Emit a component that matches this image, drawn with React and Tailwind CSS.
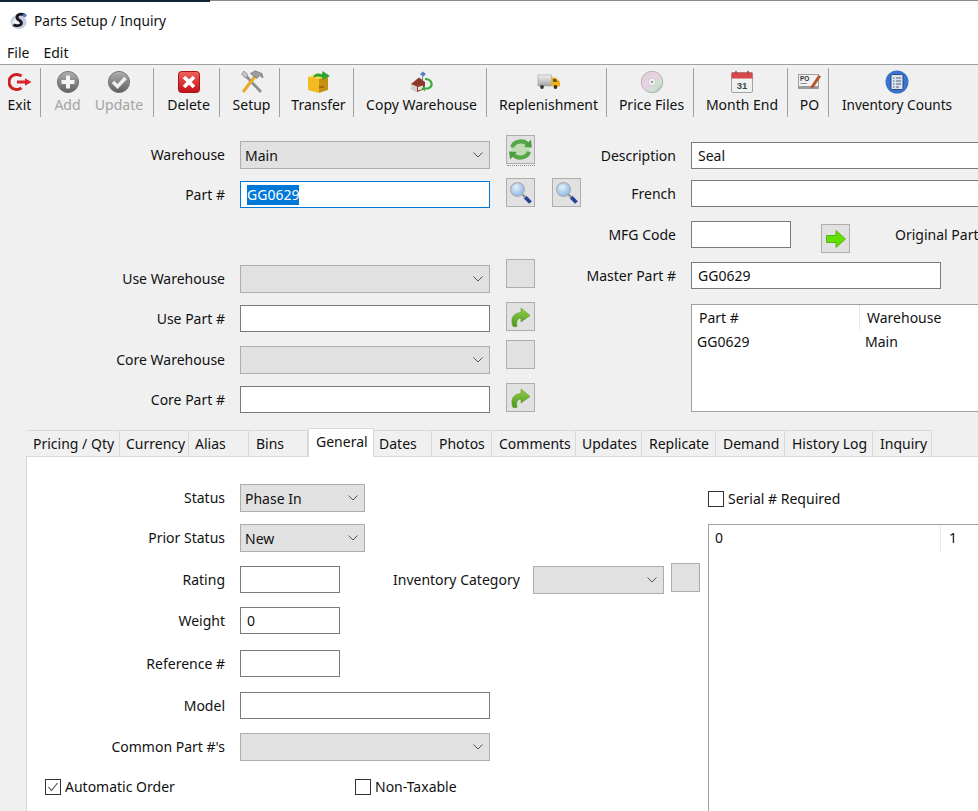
// toolbar icons, drawn by hand because none of the packages have these bitmaps
const SLogo = () => (
  <svg width="19" height="20" viewBox="0 0 20 20">
    <ellipse cx="9" cy="11" rx="8.5" ry="7.5" fill="#c3cbe0" />
    <ellipse cx="8" cy="12" rx="5.5" ry="5" fill="#eef0f6" />
    <path d="M15 3.5 C10 1.5 6.5 4 7.5 7 C8.5 9.5 12.5 9.5 12 12.5 C11.5 15.5 6 15.5 3.5 14" fill="none" stroke="#16161d" strokeWidth="3" />
    <circle cx="15.5" cy="4" r="2" fill="#5a78c8" />
  </svg>
);

const ExitIcon = () => (
  <svg width="24" height="24" viewBox="0 0 24 24">
    <path d="M13.5 6.2 A7.6 7.6 0 1 0 13.5 17.8" fill="none" stroke="#cf1f26" strokeWidth="3" />
    <path d="M9 10.6 H17 V8.2 L23.5 12 L17 15.8 V13.4 H9 Z" fill="#d8262c" />
  </svg>
);

const RoundIcon = ({ id, children }) => (
  <svg width="24" height="24" viewBox="0 0 24 24">
    <defs>
      <linearGradient id={id} x1="0" y1="0" x2="0" y2="1">
        <stop offset="0" stopColor="#b0b0b0" />
        <stop offset="1" stopColor="#5f5f5f" />
      </linearGradient>
    </defs>
    <circle cx="12" cy="12" r="10.6" fill={`url(#${id})`} stroke="#777" />
    {children}
  </svg>
);

const AddIcon = () => (
  <RoundIcon id="addGrad">
    <path d="M10 5.5 H14 V10 H18.5 V14 H14 V18.5 H10 V14 H5.5 V10 H10 Z" fill="#f4f4f4" />
  </RoundIcon>
);

const UpdateIcon = () => (
  <RoundIcon id="updGrad">
    <path d="M6 12 L10.5 16.5 L18.5 8" fill="none" stroke="#efefef" strokeWidth="3.4" />
  </RoundIcon>
);

const DeleteIcon = () => (
  <svg width="24" height="24" viewBox="0 0 24 24">
    <defs>
      <linearGradient id="delGrad" x1="0" y1="0" x2="0" y2="1">
        <stop offset="0" stopColor="#f0625c" />
        <stop offset="1" stopColor="#c40f16" />
      </linearGradient>
    </defs>
    <rect x="1.5" y="1.5" width="21" height="21" rx="3" fill="url(#delGrad)" stroke="#a8141a" />
    <path d="M7 7 L17 17 M17 7 L7 17" stroke="#fff" strokeWidth="3.8" />
  </svg>
);

const SetupIcon = () => (
  <svg width="24" height="24" viewBox="0 0 24 24">
    <path d="M5 5 L21 22" stroke="#8a8f94" strokeWidth="2.8" />
    <path d="M1.5 4 L4 1 L7 3.5 L7.5 7 L4.5 7.5 Z" fill="#c3c7cb" stroke="#80858a" strokeWidth="0.7" />
    <path d="M3 22 L16 5" stroke="#e9ab2a" strokeWidth="3.2" />
    <path d="M10.5 3.5 L15 0.8 L22 3.5 L23 8 L19.5 5.5 L17 8.5 L13.5 6 Z" fill="#9a9ea2" stroke="#6e7276" strokeWidth="0.7" />
  </svg>
);

const TransferIcon = () => (
  <svg width="24" height="24" viewBox="0 0 24 24">
    <path d="M1 7 L12 5 L12 23 L1 20 Z" fill="#f2bb22" />
    <path d="M12 5 L21 7 L21 20 L12 23 Z" fill="#c98f12" />
    <path d="M1 7 L10 3 L21 7 L12 9 Z" fill="#f8d95c" />
    <path d="M6 8 C7 3 12 2.5 15 4.5 L15.5 1 L23 6 L15 10 L15.5 7.5 C12 6 9 6 6 8 Z" fill="#2ea52e" />
    <path d="M12 17 H17" stroke="#6e4d05" />
  </svg>
);

const CopyWarehouseIcon = () => (
  <svg width="24" height="24" viewBox="0 0 24 24">
    <path d="M10 4 L13 1.5 L16 4 L13 7 Z" fill="#5a80c4" />
    <path d="M12.5 7 V10" stroke="#777" />
    <path d="M1 14 L9 7.5 L15 12 V19 L7 22 L1 18.5 Z" fill="#8c3a2a" />
    <path d="M1 14 L7 16.5 V22 L1 18.5 Z" fill="#d8d3cc" />
    <path d="M8 17 L13 15.5 V19 L8 20.5 Z" fill="#e8e3dc" />
    <path d="M15 9 C22 9 24 16 18 18.5 L13.5 18.5" fill="none" stroke="#3aac3a" strokeWidth="2.2" />
    <path d="M15 15.5 L11.5 18.5 L15 21.5 Z" fill="#3aac3a" />
  </svg>
);

const TruckIcon = () => (
  <svg width="24" height="24" viewBox="0 0 24 24">
    <defs>
      <linearGradient id="boxGrad" x1="0" y1="0" x2="0" y2="1">
        <stop offset="0" stopColor="#f2f2f2" />
        <stop offset="1" stopColor="#a4a4a4" />
      </linearGradient>
    </defs>
    <rect x="1" y="5" width="13.5" height="11" fill="url(#boxGrad)" stroke="#999" strokeWidth="0.6" />
    <path d="M14.5 7.5 H19 L23 12 V16.5 H14.5 Z" fill="#efb01e" />
    <path d="M16 9 H18.5 L20.5 11.8 H16 Z" fill="#5b4a1e" />
    <circle cx="5" cy="17" r="1.9" fill="#333" />
    <circle cx="18.5" cy="17" r="1.9" fill="#333" />
  </svg>
);

const DiscIcon = () => (
  <svg width="24" height="24" viewBox="0 0 24 24">
    <defs>
      <linearGradient id="cdGrad" x1="0" y1="0" x2="1" y2="1">
        <stop offset="0" stopColor="#d2d2d2" />
        <stop offset="0.45" stopColor="#ecd0e6" />
        <stop offset="0.75" stopColor="#c6e2ca" />
        <stop offset="1" stopColor="#9c9c9c" />
      </linearGradient>
    </defs>
    <circle cx="12" cy="12" r="10.8" fill="url(#cdGrad)" stroke="#a3a3a3" strokeWidth="0.7" />
    <circle cx="12" cy="12" r="3.6" fill="#f7f7f7" stroke="#bbb" strokeWidth="0.6" />
    <circle cx="12" cy="12" r="1.3" fill="#9c9c9c" />
  </svg>
);

const CalendarIcon = () => (
  <svg width="24" height="24" viewBox="0 0 24 24">
    <rect x="1.5" y="2.5" width="21" height="20" rx="1.5" fill="#eef1f0" stroke="#8f8f8f" strokeWidth="0.8" />
    <rect x="1.5" y="2.5" width="21" height="6" fill="#d8474b" />
    <path d="M6 0.8 V4 M18 0.8 V4" stroke="#8f4a4a" strokeWidth="1.4" />
    <text x="12" y="19" textAnchor="middle" fontSize="9.5" fontWeight="700" fill="#3b4c4c" fontFamily="Liberation Sans, sans-serif">31</text>
  </svg>
);

const PoIcon = () => (
  <svg width="24" height="24" viewBox="0 0 24 24">
    <rect x="0.5" y="4.5" width="20" height="14" fill="#f1f1f1" stroke="#8a8a8a" strokeWidth="0.8" />
    <rect x="0.5" y="16" width="20" height="3" fill="#9a9a9a" />
    <text x="2" y="11" fontSize="6.5" fontWeight="700" fill="#333" fontFamily="Liberation Sans, sans-serif">PO</text>
    <path d="M2.5 13.5 H9" stroke="#777" strokeWidth="0.8" />
    <path d="M13 16 L20.5 5 L23 6.5 L15.5 17.5 L12.5 18.5 Z" fill="#b5562a" />
  </svg>
);

const CountsIcon = () => (
  <svg width="24" height="24" viewBox="0 0 24 24">
    <circle cx="12" cy="12" r="11.5" fill="#3a72d0" />
    <rect x="6" y="4.5" width="12" height="15" rx="1" fill="#dbe3ee" stroke="#26416e" strokeWidth="0.9" />
    <path d="M8 8 H9.5 M11 8 H16 M8 11 H9.5 M11 11 H16 M8 14 H9.5 M11 14 H16 M8 17 H9.5 M11 17 H14" stroke="#40516e" strokeWidth="0.9" />
  </svg>
);

const RefreshIcon = () => (
  <svg width="25" height="25" viewBox="0 0 24 24">
    <circle cx="12" cy="12" r="9" fill="#bfdcb4" />
    <path d="M4 10 C5 4.5 14 2 19 7" fill="none" stroke="#55a848" strokeWidth="4" />
    <path d="M15.5 9.5 L23 10 L22 2.5 Z" fill="#4c9e40" />
    <path d="M20 14 C19 19.5 10 22 5 17" fill="none" stroke="#55a848" strokeWidth="4" />
    <path d="M8.5 14.5 L1 14 L2 21.5 Z" fill="#4c9e40" />
  </svg>
);

const SearchIcon = () => (
  <svg width="24" height="24" viewBox="0 0 24 24">
    <defs>
      <radialGradient id="lens" cx="0.4" cy="0.35" r="0.7">
        <stop offset="0" stopColor="#e6f1fb" />
        <stop offset="1" stopColor="#86b4e4" />
      </radialGradient>
    </defs>
    <path d="M16 16 L21.5 21.5" stroke="#1f4496" strokeWidth="3.8" />
    <path d="M13 13 L16.5 16.5" stroke="#8b8f96" strokeWidth="2.2" />
    <circle cx="8.5" cy="8.5" r="6.9" fill="url(#lens)" stroke="#aab1ba" strokeWidth="1.3" />
  </svg>
);

const GreenArrow = () => (
  <svg width="22" height="22" viewBox="0 0 22 22">
    <path d="M1.5 7.5 H11 V2.5 L20.5 11 L11 19.5 V14.5 H1.5 Z" fill="#62e000" stroke="#4da510" strokeWidth="0.8" />
  </svg>
);

const CurvedArrow = ({ id }) => (
  <svg width="22" height="22" viewBox="0 0 22 22">
    <defs>
      <linearGradient id={id} x1="0" y1="0" x2="0" y2="1">
        <stop offset="0" stopColor="#93cf48" />
        <stop offset="1" stopColor="#4a9a1a" />
      </linearGradient>
    </defs>
    <path d="M3 20.5 C0 13 3 7 11 6.5 V2 L20 9.5 L11 16 V12 C7.5 12 6 15 7 20.5 Z" fill={`url(#${id})`} stroke="#4b8c1d" strokeWidth="0.5" />
  </svg>
);

const Chevron = () => (
  <svg width="10" height="6" viewBox="0 0 10 6" className="shrink-0">
    <path d="M0.5 0.5 L5 5 L9.5 0.5" fill="none" stroke="#555" />
  </svg>
);

const tools = [
  { label: 'Exit', icon: ExitIcon, cls: 'w-[41px] pr-[1px]' },
  { label: 'Add', icon: AddIcon, cls: 'w-[53px] border-r-0', off: true },
  { label: 'Update', icon: UpdateIcon, cls: 'w-[60px] pr-[9px]', off: true },
  { label: 'Delete', icon: DeleteIcon, cls: 'w-[66px] pl-1' },
  { label: 'Setup', icon: SetupIcon, cls: 'w-[60px] pl-1' },
  { label: 'Transfer', icon: TransferIcon, cls: 'w-[74px] pl-1' },
  { label: 'Copy Warehouse', icon: CopyWarehouseIcon, cls: 'w-[133px] pl-[3px]' },
  { label: 'Replenishment', icon: TruckIcon, cls: 'w-[120px] pl-1' },
  { label: 'Price Files', icon: DiscIcon, cls: 'w-[87px] pl-[3px]' },
  { label: 'Month End', icon: CalendarIcon, cls: 'w-[94px] pl-[3px]' },
  { label: 'PO', icon: PoIcon, cls: 'w-[41px] pl-[3px]' },
  { label: 'Inventory Counts', icon: CountsIcon, cls: 'w-[132px] pl-1 border-r-0 text-[13.6px]' },
];

const tabs = [
  { label: 'Pricing / Qty', cls: 'w-[93px] pl-[6px]' },
  { label: 'Currency', cls: 'w-[69px] pl-[6px]' },
  { label: 'Alias', cls: 'w-[60px] pl-[6px]' },
  { label: 'Bins', cls: 'w-[59px] pl-[7px]' },
  { label: 'General', active: true },
  { label: 'Dates', cls: 'w-[58px] pl-[5px]' },
  { label: 'Photos', cls: 'w-[60px] pl-[7px]' },
  { label: 'Comments', cls: 'w-[84px] pl-[7px]' },
  { label: 'Updates', cls: 'w-[66px] pl-[6px]' },
  { label: 'Replicate', cls: 'w-[74px] pl-[7px]' },
  { label: 'Demand', cls: 'w-[69px] pl-[7px]' },
  { label: 'History Log', cls: 'w-[88px] pl-[7px]' },
  { label: 'Inquiry', cls: 'w-[59px] pl-[7px]' },
];

const Tool = ({ label, icon: Icon, cls, off }) => (
  <div className={`h-[49px] shrink-0 flex flex-col items-center border-r border-[#a0a0a0] ${cls}`}>
    <div className="h-[26px] pt-[2px]"><Icon /></div>
    <span className={`h-[20px] leading-[21px] whitespace-nowrap ${off ? 'text-[#a3a3a3]' : ''}`}>{label}</span>
  </div>
);

const Select = ({ value, cls }) => (
  <div className={`h-[28px] shrink-0 flex items-center justify-between pl-[4px] pr-[6px] bg-[#e1e1e1] border border-[#adadad] ${cls}`}>
    <span>{value}</span>
    <Chevron />
  </div>
);

const Field = ({ value = '', cls }) => (
  <input readOnly value={value} className={`h-[27px] shrink-0 px-[6px] bg-white border border-[#7a7a7a] outline-none ${cls}`} />
);

const SquareBtn = ({ cls, children }) => (
  <div className={`w-[29px] h-[29px] shrink-0 flex items-center justify-center bg-[#e1e1e1] border border-[#adadad] ${cls}`}>
    {children}
  </div>
);

const Row = ({ label, labelCls, cls, children }) => (
  <div className={`flex items-start ${cls}`}>
    <div className={`text-right shrink-0 leading-[27px] ${labelCls}`}>{label}</div>
    {children}
  </div>
);

const CheckBox = ({ checked, label, cls }) => (
  <div className={`flex items-center gap-[4px] ${cls}`}>
    <div className="w-[16px] h-[16px] flex items-center justify-center bg-white border border-[#333]">
      {checked && (
        <svg width="12" height="12" viewBox="0 0 12 12">
          <path d="M1.5 6 L4.5 9.5 L10.5 2" fill="none" stroke="#444" strokeWidth="1.1" />
        </svg>
      )}
    </div>
    <span>{label}</span>
  </div>
);

export default function App() {
  return (
    <div className="w-[978px] h-[811px] overflow-hidden bg-[#f0f0f0] text-[#111] text-[14px] font-['Noto_Sans',sans-serif]">
      {/* title bar */}
      <div className="flex h-[2px] bg-white">
        <div className="w-[210px] bg-[#0e2238]" />
        <div className="flex-1 h-[1px] bg-[#8a8a8a]" />
      </div>
      <div className="h-[38px] bg-white flex items-center pl-[10px] gap-[5px]">
        <SLogo />
        <span className="text-[13.7px]">Parts Setup / Inquiry</span>
      </div>
      <div className="h-[25px] bg-white border-b border-[#a0a0a0] flex items-center pl-[7px] gap-[14px]">
        <span>File</span>
        <span>Edit</span>
      </div>

      {/* toolbar */}
      <div className="h-[61px] pt-[3px] flex">
        {tools.map((t) => <Tool key={t.label} {...t} />)}
      </div>

      {/* top form */}
      <div className="h-[304px] flex overflow-hidden">
        <div className="w-[581px] shrink-0 pt-[15px]">
          <Row label="Warehouse" labelCls="w-[225px]">
            <Select value="Main" cls="ml-[15px] w-[250px]" />
            <div className="relative ml-[16px] -mt-[6px]">
              <SquareBtn><RefreshIcon /></SquareBtn>
              <div className="absolute left-[1px] right-0 -bottom-[2px] border-t border-dotted border-[#8a8a8a]" />
            </div>
          </Row>
          <Row label="Part #" labelCls="w-[225px]" cls="mt-[12px]">
            <div className="ml-[15px] w-[250px] h-[27px] flex items-center pl-[6px] bg-white border border-[#0078d7]">
              <span className="bg-[#0078d7] text-white leading-[20px]">GG0629</span>
            </div>
            <SquareBtn cls="ml-[16px] -mt-[3px]"><SearchIcon /></SquareBtn>
            <SquareBtn cls="ml-[17px] -mt-[3px]"><SearchIcon /></SquareBtn>
          </Row>
          <Row label="Use Warehouse" labelCls="w-[225px]" cls="mt-[57px]">
            <Select cls="ml-[15px] w-[250px]" />
            <SquareBtn cls="ml-[16px] -mt-[6px]" />
          </Row>
          <Row label="Use Part #" labelCls="w-[225px]" cls="mt-[12px]">
            <Field cls="ml-[15px] w-[250px]" />
            <SquareBtn cls="ml-[16px] -mt-[3px]"><CurvedArrow id="useArrow" /></SquareBtn>
          </Row>
          <Row label="Core Warehouse" labelCls="w-[225px]" cls="mt-[14px]">
            <Select cls="ml-[15px] w-[250px]" />
            <SquareBtn cls="ml-[16px] -mt-[6px]" />
          </Row>
          <Row label="Core Part #" labelCls="w-[225px]" cls="mt-[12px]">
            <Field cls="ml-[15px] w-[250px]" />
            <SquareBtn cls="ml-[16px] -mt-[3px]"><CurvedArrow id="coreArrow" /></SquareBtn>
          </Row>
        </div>

        <div className="flex-1 min-w-0 pt-[16px]">
          <Row label="Description" labelCls="w-[95px]">
            <Field value="Seal" cls="ml-[15px] w-[320px]" />
          </Row>
          <Row label="French" labelCls="w-[95px]" cls="mt-[11px]">
            <Field cls="ml-[15px] w-[320px]" />
          </Row>
          <Row label="MFG Code" labelCls="w-[95px]" cls="mt-[14px]">
            <Field cls="ml-[15px] w-[100px]" />
            <SquareBtn cls="ml-[30px] mt-[3px] -mb-[5px]"><GreenArrow /></SquareBtn>
            <span className="ml-[45px] leading-[27px] whitespace-nowrap">Original Part</span>
          </Row>
          <Row label="Master Part #" labelCls="w-[95px]" cls="mt-[14px]">
            <Field value="GG0629" cls="ml-[15px] w-[250px]" />
          </Row>
          <div className="ml-[110px] mt-[15px] w-[320px] h-[108px] bg-white border border-[#a0a0a0]">
            <div className="flex h-[26px] leading-[26px]">
              <div className="w-[168px] pl-[7px] border-r border-[#e8e8e8]">Part #</div>
              <div className="pl-[7px]">Warehouse</div>
            </div>
            <div className="flex leading-[21px]">
              <div className="w-[168px] pl-[5px]">GG0629</div>
              <div className="pl-[5px]">Main</div>
            </div>
          </div>
        </div>
      </div>

      {/* tabs */}
      <div className="h-[26px] pl-[27px] flex items-end">
        {tabs.map((t) =>
          t.active ? (
            <div key={t.label} className="relative z-10 w-[66px] h-[29px] -mb-[1px] pl-[7px] leading-[25px] bg-white border border-b-0 border-[#d9d9d9]">
              {t.label}
            </div>
          ) : (
            <div key={t.label} className={`h-[26px] leading-[26px] border-t border-r border-[#d9d9d9] whitespace-nowrap ${t.cls}`}>
              {t.label}
            </div>
          )
        )}
      </div>

      {/* general tab */}
      <div className="ml-[26px] h-[355px] flex bg-white border-l border-t border-[#d9d9d9] overflow-hidden">
        <div className="w-[681px] shrink-0 pt-[27px]">
          <Row label="Status" labelCls="w-[198px]">
            <Select value="Phase In" cls="ml-[15px] w-[125px]" />
          </Row>
          <Row label="Prior Status" labelCls="w-[198px]" cls="mt-[12px]">
            <Select value="New" cls="ml-[15px] w-[125px]" />
          </Row>
          <Row label="Rating" labelCls="w-[198px]" cls="mt-[14px]">
            <Field cls="ml-[15px] w-[100px]" />
            <span className="ml-[53px] w-[125px] leading-[27px] whitespace-nowrap">Inventory Category</span>
            <Select cls="ml-[15px] w-[131px]" />
            <SquareBtn cls="ml-[7px] -mt-[3px]" />
          </Row>
          <Row label="Weight" labelCls="w-[198px]" cls="mt-[13px]">
            <Field value="0" cls="ml-[15px] w-[100px]" />
          </Row>
          <Row label="Reference #" labelCls="w-[198px]" cls="mt-[16px]">
            <Field cls="ml-[15px] w-[100px]" />
          </Row>
          <Row label="Model" labelCls="w-[198px]" cls="mt-[15px]">
            <Field cls="ml-[15px] w-[250px]" />
          </Row>
          <Row label="Common Part #'s" labelCls="w-[198px]" cls="mt-[14px]">
            <Select cls="ml-[15px] w-[250px]" />
          </Row>
          <div className="flex mt-[15px] pl-[18px]">
            <CheckBox checked label="Automatic Order" cls="w-[310px]" />
            <CheckBox label="Non-Taxable" />
          </div>
        </div>

        <div className="flex-1 min-w-0 pt-[31px]">
          <CheckBox label="Serial # Required" />
          <div className="mt-[15px] h-[320px] bg-white border-l border-t border-[#a0a0a0]">
            <div className="flex h-[26px] leading-[26px]">
              <div className="w-[232px] pl-[6px] border-r border-[#e8e8e8]">0</div>
              <div className="pl-[8px]">1</div>
            </div>
          </div>
        </div>
      </div>
    </div>
  );
}
